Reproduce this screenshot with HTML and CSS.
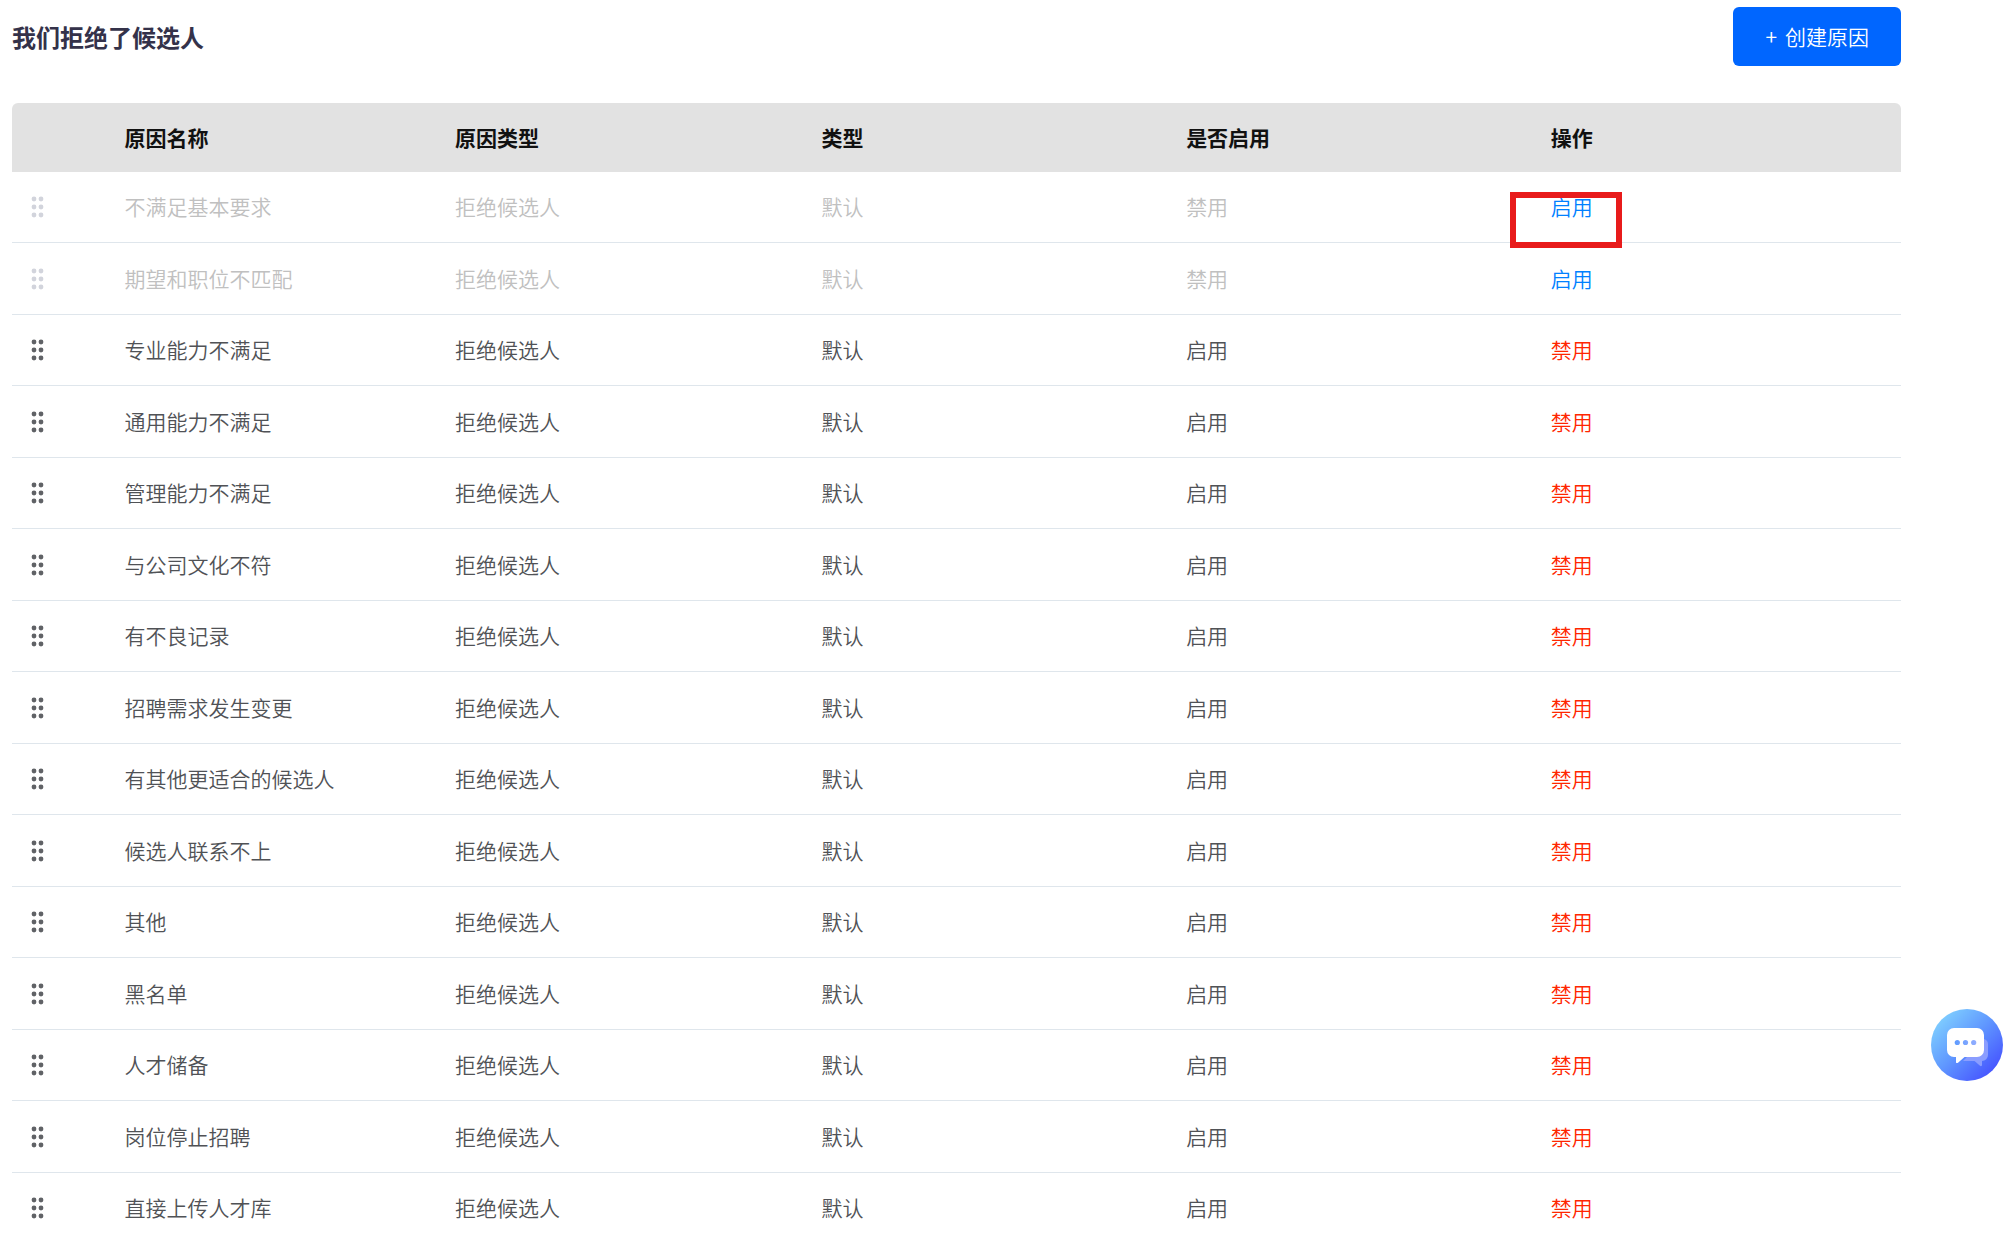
FILE: index.html
```html
<!DOCTYPE html>
<html lang="zh-CN">
<head>
    <meta charset="UTF-8">
    <meta name="viewport" content="width=device-width, initial-scale=1.0">
    <title>我们拒绝了候选人</title>
    <link rel="stylesheet" href="styles.css">
</head>
<body>

<svg class="sprite" aria-hidden="true">
    <symbol id="drag" viewBox="0 0 13 22">
        <circle cx="3" cy="3" r="2.4"/>
        <circle cx="10" cy="3" r="2.4"/>
        <circle cx="3" cy="11" r="2.4"/>
        <circle cx="10" cy="11" r="2.4"/>
        <circle cx="3" cy="19" r="2.4"/>
        <circle cx="10" cy="19" r="2.4"/>
    </symbol>
</svg>

<div class="page">
    <div class="page-header">
        <h2>我们拒绝了候选人</h2>
        <button type="button" class="btn-create"><span>+</span><span>创建原因</span></button>
    </div>

    <table class="reason-table">
        <colgroup>
            <col class="col-drag">
            <col class="col-name">
            <col class="col-reason">
            <col class="col-type">
            <col class="col-status">
            <col class="col-action">
        </colgroup>
        <thead>
            <tr>
                <th></th>
                <th>原因名称</th>
                <th>原因类型</th>
                <th>类型</th>
                <th>是否启用</th>
                <th>操作</th>
            </tr>
        </thead>
        <tbody>
            <tr class="disabled">
                <td class="handle"><svg class="drag"><use href="#drag"/></svg></td>
                <td>不满足基本要求</td>
                <td>拒绝候选人</td>
                <td>默认</td>
                <td>禁用</td>
                <td class="marked"><button type="button" class="enable">启用</button></td>
            </tr>
            <tr class="disabled">
                <td class="handle"><svg class="drag"><use href="#drag"/></svg></td>
                <td>期望和职位不匹配</td>
                <td>拒绝候选人</td>
                <td>默认</td>
                <td>禁用</td>
                <td><button type="button" class="enable">启用</button></td>
            </tr>
            <tr>
                <td class="handle"><svg class="drag"><use href="#drag"/></svg></td>
                <td>专业能力不满足</td>
                <td>拒绝候选人</td>
                <td>默认</td>
                <td>启用</td>
                <td><button type="button" class="disable">禁用</button></td>
            </tr>
            <tr>
                <td class="handle"><svg class="drag"><use href="#drag"/></svg></td>
                <td>通用能力不满足</td>
                <td>拒绝候选人</td>
                <td>默认</td>
                <td>启用</td>
                <td><button type="button" class="disable">禁用</button></td>
            </tr>
            <tr>
                <td class="handle"><svg class="drag"><use href="#drag"/></svg></td>
                <td>管理能力不满足</td>
                <td>拒绝候选人</td>
                <td>默认</td>
                <td>启用</td>
                <td><button type="button" class="disable">禁用</button></td>
            </tr>
            <tr>
                <td class="handle"><svg class="drag"><use href="#drag"/></svg></td>
                <td>与公司文化不符</td>
                <td>拒绝候选人</td>
                <td>默认</td>
                <td>启用</td>
                <td><button type="button" class="disable">禁用</button></td>
            </tr>
            <tr>
                <td class="handle"><svg class="drag"><use href="#drag"/></svg></td>
                <td>有不良记录</td>
                <td>拒绝候选人</td>
                <td>默认</td>
                <td>启用</td>
                <td><button type="button" class="disable">禁用</button></td>
            </tr>
            <tr>
                <td class="handle"><svg class="drag"><use href="#drag"/></svg></td>
                <td>招聘需求发生变更</td>
                <td>拒绝候选人</td>
                <td>默认</td>
                <td>启用</td>
                <td><button type="button" class="disable">禁用</button></td>
            </tr>
            <tr>
                <td class="handle"><svg class="drag"><use href="#drag"/></svg></td>
                <td>有其他更适合的候选人</td>
                <td>拒绝候选人</td>
                <td>默认</td>
                <td>启用</td>
                <td><button type="button" class="disable">禁用</button></td>
            </tr>
            <tr>
                <td class="handle"><svg class="drag"><use href="#drag"/></svg></td>
                <td>候选人联系不上</td>
                <td>拒绝候选人</td>
                <td>默认</td>
                <td>启用</td>
                <td><button type="button" class="disable">禁用</button></td>
            </tr>
            <tr>
                <td class="handle"><svg class="drag"><use href="#drag"/></svg></td>
                <td>其他</td>
                <td>拒绝候选人</td>
                <td>默认</td>
                <td>启用</td>
                <td><button type="button" class="disable">禁用</button></td>
            </tr>
            <tr>
                <td class="handle"><svg class="drag"><use href="#drag"/></svg></td>
                <td>黑名单</td>
                <td>拒绝候选人</td>
                <td>默认</td>
                <td>启用</td>
                <td><button type="button" class="disable">禁用</button></td>
            </tr>
            <tr>
                <td class="handle"><svg class="drag"><use href="#drag"/></svg></td>
                <td>人才储备</td>
                <td>拒绝候选人</td>
                <td>默认</td>
                <td>启用</td>
                <td><button type="button" class="disable">禁用</button></td>
            </tr>
            <tr>
                <td class="handle"><svg class="drag"><use href="#drag"/></svg></td>
                <td>岗位停止招聘</td>
                <td>拒绝候选人</td>
                <td>默认</td>
                <td>启用</td>
                <td><button type="button" class="disable">禁用</button></td>
            </tr>
            <tr>
                <td class="handle"><svg class="drag"><use href="#drag"/></svg></td>
                <td>直接上传人才库</td>
                <td>拒绝候选人</td>
                <td>默认</td>
                <td>启用</td>
                <td><button type="button" class="disable">禁用</button></td>
            </tr>
        </tbody>
    </table>
</div>

<button type="button" class="chat" aria-label="在线客服">
    <svg viewBox="0 0 72 72">
        <defs>
            <linearGradient id="bubble-dots" x1="24" y1="0" x2="46" y2="0" gradientUnits="userSpaceOnUse">
                <stop offset="0" stop-color="#609cff"/>
                <stop offset="1" stop-color="#94aeff"/>
            </linearGradient>
        </defs>
        <path fill="#8a9dff" d="M50 30h2a5 5 0 0 1 5 5v11a6 6 0 0 1-6 6v4c0 1-1 1.500-2 .8L43.500 52H32l4-4h9a8 8 0 0 0 5-8z"/>
        <path fill="#fff" d="M23 19h23a7 7 0 0 1 7 7v15a7 7 0 0 1-7 7H33.500l-6.500 5.700c-1 .8-2 .4-2-.8V48h-2a7 7 0 0 1-7-7V26a7 7 0 0 1 7-7z"/>
        <g fill="url(#bubble-dots)">
            <circle cx="26.300" cy="33.500" r="2.600"/>
            <circle cx="34.500" cy="33.500" r="2.600"/>
            <circle cx="42.700" cy="33.500" r="2.600"/>
        </g>
    </svg>
</button>

</body>
</html>
```
FILE: styles.css
```css
* {
    box-sizing: border-box;
}

body {
    margin: 0;
    background-color: #fff;
    color: #505256;
    font-family: "Noto Sans CJK SC", sans-serif;
    font-size: 21px;
    font-weight: 350;
    line-height: 30px;
    overflow-x: hidden;
}

button {
    border: none;
    font: inherit;
    cursor: pointer;
}

.sprite {
    display: none;
}

.page {
    padding: 7px 110px 0 12px;
}

.page-header {
    display: flex;
    justify-content: space-between;
    align-items: center;
    margin-bottom: 37px;
}

h2 {
    margin: 0;
    color: #34324a;
    font-size: 24px;
    font-weight: 700;
}

.btn-create {
    display: flex;
    gap: 8px;
    padding: 14px 32px 15px;
    background-color: #0066ff;
    color: #fff;
    border-radius: 6px;
}

.reason-table {
    width: 100%;
    table-layout: fixed;
    border-collapse: separate;
    border-spacing: 0;
}

.col-drag {
    width: 4.9%;
}

.col-name {
    width: 17.5%;
}

.col-reason {
    width: 19.4%;
}

.col-type,
.col-status {
    width: 19.3%;
}

th,
td {
    padding: 0 20px 2px;
    text-align: left;
}

th {
    height: 69px;
    background-color: #e2e2e2;
    color: #111;
    font-weight: 700;
}

th:first-child {
    border-top-left-radius: 6px;
}

th:last-child {
    border-top-right-radius: 6px;
}

td {
    height: 71px;
    border-bottom: 1px solid #dfe6ec;
}

tr:nth-child(even) td {
    height: 72px;
}

td button {
    padding: 0;
    background: none;
}

.handle {
    padding: 0 19px;
}

.enable {
    color: #0080ff;
}

.disable {
    color: #ff2600;
}

.drag {
    display: block;
    width: 13px;
    height: 22px;
    fill: #606266;
}

.disabled td {
    color: #c0c0c0;
}

.disabled .drag {
    fill: #d2d4dc;
}

/* red frame over the first action */
.marked {
    position: relative;
}

.marked::after {
    content: "";
    box-sizing: border-box;
    position: absolute;
    top: 20px;
    left: -21px;
    width: 112px;
    height: 56px;
    border: 6px solid #e81b1b;
    pointer-events: none;
}

.chat {
    position: fixed;
    right: 8px;
    bottom: 156px;
    width: 72px;
    height: 72px;
    padding: 0;
    border-radius: 50%;
    background: linear-gradient(135deg, #82d4ff 8%, #6098ff 48%, #4450ff 90%);
}

.chat svg {
    display: block;
}
```
